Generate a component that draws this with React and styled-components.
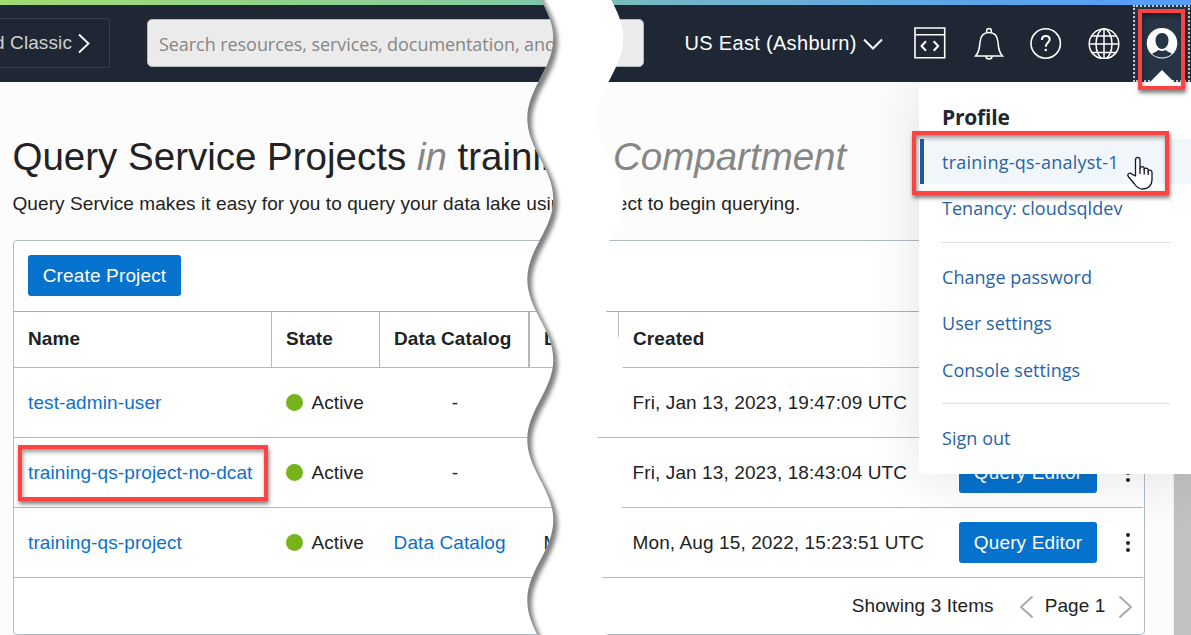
import React from 'react';
import styled, { createGlobalStyle, css } from 'styled-components';

const GlobalStyle = createGlobalStyle`
  *, *::before, *::after { box-sizing: border-box; }
  html, body { margin: 0; height: 100%; overflow: hidden; }
  body {
    background: #fcfcfc;
    color: #222;
    font: 19px/24px "Liberation Sans", Arial, sans-serif;
    letter-spacing: 0.1px;
  }
`;

const red = '#ff4242';
const line = '#b3b9c1';

const Screen = styled.div`
  position: relative;
  width: 1191px;
  height: 635px;
  overflow: hidden;
  display: flex;
  flex-direction: column;
`;

const Strip = styled.div`
  height: 5px;
  flex: none;
  background: linear-gradient(90deg, #a1dc70 0%, #85cba0 42%, #6fb5cc 58%, #5fa6e6 78%, #559cfc 100%);
`;

const Header = styled.header`
  position: relative;
  z-index: 3;
  height: 77px;
  flex: none;
  display: flex;
  align-items: center;
  padding-bottom: 1px;
  background: #1e2733;
  color: #fff;
`;

const ClassicLink = styled.div`
  width: 110px;
  height: 50px;
  margin-right: 37px;
  flex: none;
  display: flex;
  align-items: center;
  justify-content: flex-end;
  gap: 6px;
  padding-right: 19px;
  overflow: hidden;
  white-space: nowrap;
  border: 1px solid #36404c;
  border-left: 0;
  border-radius: 0 3px 3px 0;
  color: #cfd1d3;
  svg { flex: none; }
`;

const Search = styled.div`
  width: 497px;
  height: 48px;
  flex: none;
  padding: 1px 11px 0;
  line-height: 46px;
  border: 1px solid #b4bac0;
  border-radius: 5px;
  background: #ebebeb;
  color: #868686;
  font-family: "Open Sans", sans-serif;
  font-size: 18px;
  letter-spacing: -0.06px;
  white-space: nowrap;
  overflow: hidden;
`;

const Region = styled.div`
  width: 198px;
  margin-left: 40.5px;
  flex: none;
  display: flex;
  align-items: center;
  justify-content: space-between;
  font-size: 20px;
  letter-spacing: 0.32px;
  white-space: nowrap;
`;

const HeaderIcons = styled.div`
  display: flex;
  flex: none;
  align-items: center;
  gap: 26px;
  margin-left: 31.5px;
  svg { display: block; }
  svg:first-child { margin-right: 1.5px; }
`;

const AvatarCell = styled.div`
  position: relative;
  width: 57px;
  height: 77px;
  margin-left: 13.5px;
  flex: none;
  align-self: flex-start;
  display: flex;
  justify-content: center;
  padding-top: 20px;
  border: 2px dotted #c5cacf;
  background: #263545;
`;

const Caret = styled.div`
  position: absolute;
  left: 50%;
  bottom: -2px;
  margin-left: -12px;
  border: 12px solid transparent;
  border-top: 0;
  border-bottom-color: #fff;
`;

const Highlight = styled.div`
  position: absolute;
  inset: ${(p) => p.$inset};
  border: 4px solid ${red};
  box-shadow: 1px 3px 4px rgba(0, 0, 0, 0.5), inset 1px 3px 4px rgba(0, 0, 0, 0.4);
  pointer-events: none;
`;

const Body = styled.div`
  flex: 1;
  display: flex;
  min-height: 0;
`;

const Main = styled.main`
  width: 1172px;
  flex: none;
  padding: 50px 27px 0 13px;
`;

const Scrollbar = styled.div`
  flex: 1;
  background: #c1c1c1;
  border-left: 2px solid #f5f5f5;
`;

const Title = styled.h1`
  display: flex;
  margin: 0 0 0 -0.5px;
  height: 50px;
  font-size: 38.5px;
  line-height: 49px;
  font-weight: 400;
  letter-spacing: 0;
  white-space: nowrap;
  em { color: #868686; }
`;

const Lead = styled.span`
  width: ${(p) => p.$width}px;
  flex: none;
  white-space: pre;
`;

const Description = styled.p`
  display: flex;
  margin: 10px 0 25px -0.5px;
  height: 23px;
  line-height: 23px;
  letter-spacing: 0.08px;
  white-space: nowrap;
`;

const Panel = styled.section`
  height: 395px;
  width: 1132px;
  padding-right: 1px;
  border: 1px solid ${line};
  border-radius: 4px;
  background: #fff;
`;

const Toolbar = styled.div`
  height: 71px;
  padding: 14px;
  border-bottom: 1px solid #acaeb1;
`;

const Button = styled.button`
  display: block;
  width: ${(p) => p.$width}px;
  height: 41px;
  padding: 0;
  border: 0;
  border-radius: 3px;
  background: #0572ce;
  color: #fff;
  font: inherit;
  line-height: ${(p) => p.$lineHeight || 41}px;
  letter-spacing: 0.15px;
`;

const rowGrid = css`
  display: grid;
  grid-template-columns: 258px 108px 150px 89px 340px 1fr;
  border-bottom: 1px solid ${line};
`;

const HeadRow = styled.div`
  ${rowGrid}
  height: 56px;
  font-weight: 700;
`;

const HeadCell = styled.div`
  padding-left: 14px;
  line-height: 54px;
  white-space: nowrap;
  border-right: ${(p) => p.$rule || 0}px solid ${line};
`;

const Row = styled.div`
  ${rowGrid}
  height: 70px;
`;

const Cell = styled.div`
  position: relative;
  display: flex;
  align-items: center;
  justify-content: ${(p) => (p.$center ? 'center' : 'flex-start')};
  padding-left: ${(p) => (p.$center ? 0 : 13.6)}px;
  white-space: nowrap;
  &:first-child { padding-left: 14px; }
`;

const Actions = styled.div`
  display: flex;
  align-items: center;
`;

const Link = styled.a`
  color: #0b6fd0;
`;

const Dot = styled.i`
  width: 17px;
  height: 17px;
  margin: 0 8.5px 0 0.4px;
  border-radius: 50%;
  background: #77b41a;
`;

const Kebab = styled.div`
  display: flex;
  flex-direction: column;
  gap: 3.5px;
  margin-left: 29px;
  i { width: 4px; height: 4px; border-radius: 50%; background: #222; }
`;

const Footer = styled.div`
  height: 56px;
  display: flex;
  align-items: center;
  justify-content: flex-end;
  padding-right: 10px;
`;

const Count = styled.span`margin-right: 25px;`;
const PageNo = styled.span`margin: 0 12.5px 0 11px;`;

const Tear = styled.svg`
  position: absolute;
  inset: 0;
  z-index: 4;
  pointer-events: none;
`;

const Menu = styled.nav`
  position: absolute;
  z-index: 2;
  left: 919px;
  top: 82px;
  width: 280px;
  height: 392px;
  padding-top: 21px;
  border-radius: 5px;
  background: #fff;
  box-shadow: 0 4px 56px rgba(0, 20, 20, 0.11);
  color: #2763a8;
  font-family: "Open Sans", sans-serif;
  font-size: 18px;
  letter-spacing: 0.05px;
`;

const MenuTitle = styled.div`
  height: 36px;
  padding-left: 23px;
  line-height: 28px;
  color: #1e2733;
  font-size: 21px;
  font-weight: 700;
  letter-spacing: -0.2px;
`;

const MenuItem = styled.div`
  position: relative;
  height: ${(p) => p.$height || 46}px;
  padding-left: 23px;
  line-height: 46px;
  ${(p) => p.$active && css`
    height: 45px;
    margin: 0 0 1px 1px;
    padding-left: 18px;
    border-left: 4px solid #1f5ba3;
    background: #f1f6fb;
    letter-spacing: 0.25px;
  `}
`;

const Divider = styled.hr`
  width: 228px;
  margin: ${(p) => p.$margin};
  border: 0;
  border-top: 1px solid #dfe0e1;
`;

const Hand = styled.svg`
  position: absolute;
  left: 1127px;
  top: 156px;
  z-index: 5;
`;

const Chevron = ({ d, w, h, color = '#fff', stroke = 1.8 }) => (
  <svg width={w} height={h} viewBox={`0 0 ${w} ${h}`} fill="none" stroke={color} strokeWidth={stroke}>
    <path d={d} />
  </svg>
);

const CodeIcon = () => (
  <svg width="32" height="32" viewBox="0 0 32 32" fill="none" stroke="#fff" strokeWidth="1.6">
    <path d="M1 1h29.700v29.700H1zM1 7.700h29.700" />
    <path d="M12 14.200 7.500 19l4.500 4.800M19.700 14.200l4.500 4.800-4.500 4.800" strokeWidth="2" />
  </svg>
);

const BellIcon = () => (
  <svg width="30" height="34" viewBox="0 0 30 34" fill="none" stroke="#fff" strokeWidth="1.5">
    <path d="M1.500 30C5 26.500 5.500 22.500 6 16 6.500 10 9.500 6.500 15 6.500s8.500 3.500 9 9.500c.5 6.500 1 10.500 4.500 14z" />
    <path d="M12.700 6.500V4.700a2.300 2.300 0 0 1 4.600 0v1.800M12 30.200a3 2.800 0 0 0 6 0" />
  </svg>
);

const HelpIcon = () => (
  <svg width="32" height="32" viewBox="0 0 32 32" fill="none" stroke="#fff" strokeWidth="1.6">
    <circle cx="15.700" cy="16.500" r="14.700" />
    <path d="M11.900 12.900c0-2.400 1.600-3.900 3.900-3.900s3.900 1.400 3.900 3.500c0 3-3.900 3.300-3.900 7.300" strokeWidth="2" />
    <circle cx="15.800" cy="23" r="1.300" fill="#fff" stroke="none" />
  </svg>
);

const GlobeIcon = () => (
  <svg width="32" height="32" viewBox="0 0 32 32" fill="none" stroke="#fff" strokeWidth="1.500">
    <circle cx="16" cy="16.900" r="14.800" />
    <ellipse cx="16" cy="16.900" rx="8" ry="14.800" />
    <path d="M16 2v30M1.200 16.900h29.600M3.500 8.900h25M3.500 25.400h25" />
  </svg>
);

const AvatarIcon = () => (
  <svg width="32" height="32" viewBox="0 0 32 32">
    <circle cx="16" cy="16.300" r="15.300" fill="#fff" />
    <path d="M16 6c-4 0-6.500 3.200-6.500 7.500s2.600 8.500 6.500 8.500 6.500-4.200 6.500-8.500S20 6 16 6z" fill="#263545" />
    <path d="M6 26.800c2.500-1.500 4.500-2.300 6.500-3.800q3.500 2 7 0c2 1.500 4 2.300 6.500 3.800Q22 30.600 16 30.600T6 26.800z" fill="#263545" />
  </svg>
);

/* Wavy edge with its crests at x+13 and its troughs at x-13. */
const top = -42;
const wave = (x) => {
  const half = 80.3;
  const k = 30;
  let d = `M${x - 13} ${top}`;
  let y = top;
  let side = 1;
  for (let i = 0; i < 9; i += 1) {
    const from = x - side * 13;
    const to = x + side * 13;
    d += ` C${from} ${y + k} ${to} ${y + half - k} ${to} ${y + half}`;
    y += half;
    side = -side;
  }
  return d;
};

const leftEdge = wave(540.3);

const TornGap = () => (
  <Tear width="1191" height="635" viewBox="0 0 1191 635">
    <defs>
      <clipPath id="gap"><path d={`${leftEdge} H640 V${top} Z`} /></clipPath>
      <clipPath id="rightSide"><path d={`${wave(610.3)} H500 V${top} Z`} /></clipPath>
      <filter id="soft" x="-10%" y="-10%" width="120%" height="120%">
        <feGaussianBlur stdDeviation="2" />
      </filter>
    </defs>
    <g clipPath="url(#rightSide)">
      <g clipPath="url(#gap)">
        <rect x="500" width="140" height="635" fill="#fff" />
        <path d={`${leftEdge} H400 V${top} Z`} transform="translate(4.500 4)" fill="#808080" filter="url(#soft)" />
      </g>
    </g>
  </Tear>
);

const rows = [
  { name: 'test-admin-user', created: 'Fri, Jan 13, 2023, 19:47:09 UTC' },
  { name: 'training-qs-project-no-dcat', created: 'Fri, Jan 13, 2023, 18:43:04 UTC', marked: true },
  { name: 'training-qs-project', catalog: 'Data Catalog', extra: 'M', created: 'Mon, Aug 15, 2022, 15:23:51 UTC' },
];

export default function App() {
  return (
    <Screen>
      <GlobalStyle />
      <Strip />
      <Header>
        <ClassicLink>
          <span>d Classic</span>
          <Chevron w={12} h={22} d="M1 2.500l9.500 9L1 20.500" />
        </ClassicLink>
        <Search>Search resources, services, documentation, and</Search>
        <Region>
          US East (Ashburn)
          <Chevron w={20} h={13} stroke={2} d="M1 2.500l9 9 9-9" />
        </Region>
        <HeaderIcons>
          <CodeIcon />
          <BellIcon />
          <HelpIcon />
          <GlobeIcon />
        </HeaderIcons>
        <AvatarCell>
          <AvatarIcon />
          <Caret />
          <Highlight $inset="2px 3px -10px 3px" />
        </AvatarCell>
      </Header>
      <Body>
        <Main>
          <Title>
            <Lead $width={600.5}>Query Service Projects <em>in</em> training</Lead>
            <em>Compartment</em>
          </Title>
          <Description>
            <Lead $width={600}>Query Service makes it easy for you to query your data lake using</Lead>
            <span>ject to begin querying.</span>
          </Description>
          <Panel>
            <Toolbar><Button $width={153} $lineHeight={42}>Create Project</Button></Toolbar>
            <HeadRow>
              <HeadCell $rule={1}>Name</HeadCell>
              <HeadCell $rule={1}>State</HeadCell>
              <HeadCell $rule={2}>Data Catalog</HeadCell>
              <HeadCell $rule={1}>L</HeadCell>
              <HeadCell>Created</HeadCell>
            </HeadRow>
            {rows.map((r) => (
              <Row key={r.name}>
                <Cell>
                  <Link>{r.name}</Link>
                  {r.marked && <Highlight $inset="7px 4px 6px 4px" />}
                </Cell>
                <Cell><Dot />Active</Cell>
                <Cell $center={!r.catalog}>{r.catalog ? <Link>{r.catalog}</Link> : '-'}</Cell>
                <Cell>{r.extra}</Cell>
                <Cell>{r.created}</Cell>
                <Actions>
                  <Button $width={138} $lineHeight={40}>Query Editor</Button>
                  <Kebab><i /><i /><i /></Kebab>
                </Actions>
              </Row>
            ))}
            <Footer>
              <Count>Showing 3 Items</Count>
              <Chevron w={15} h={24} stroke={2} color="#aaa" d="M13.500 2.500L2 13l11.500 10.500" />
              <PageNo>Page 1</PageNo>
              <Chevron w={15} h={24} stroke={2} color="#aaa" d="M1.500 2.500L13 13 1.500 23.500" />
            </Footer>
          </Panel>
        </Main>
        <Scrollbar />
      </Body>
      <TornGap />
      <Menu>
        <MenuTitle>Profile</MenuTitle>
        <MenuItem $active>
          training-qs-analyst-1
          <Highlight $inset="-8px 30px -11px -12px" />
        </MenuItem>
        <MenuItem>Tenancy: cloudsqldev</MenuItem>
        <Divider $margin="11px 0 11px 23px" />
        <MenuItem>Change password</MenuItem>
        <MenuItem $height={47}>User settings</MenuItem>
        <MenuItem>Console settings</MenuItem>
        <Divider $margin="10px 0 11px 23px" />
        <MenuItem>Sign out</MenuItem>
      </Menu>
      <Hand width="26" height="34" viewBox="0 0 26 34" fill="#fff" stroke="#111827" strokeWidth="1.300" strokeLinejoin="round">
        <path d="M8.500 20V4c0-3.600 4.500-3.600 4.500 0v8.500c0-2.500 4.200-2.400 4.200.3v.7c.3-2 4-1.900 4 .7v1c.5-1.800 3.800-1.500 3.800 1V24c0 5.500-4 9-9 9-4.500 0-6.500-2-8.500-5L1.300 20.500c-1.500-3 1.700-4.300 3.500-2.300z" />
        <path d="M13 12v6M17.200 13v5.500M21.200 14.500V19" fill="none" />
      </Hand>
    </Screen>
  );
}
